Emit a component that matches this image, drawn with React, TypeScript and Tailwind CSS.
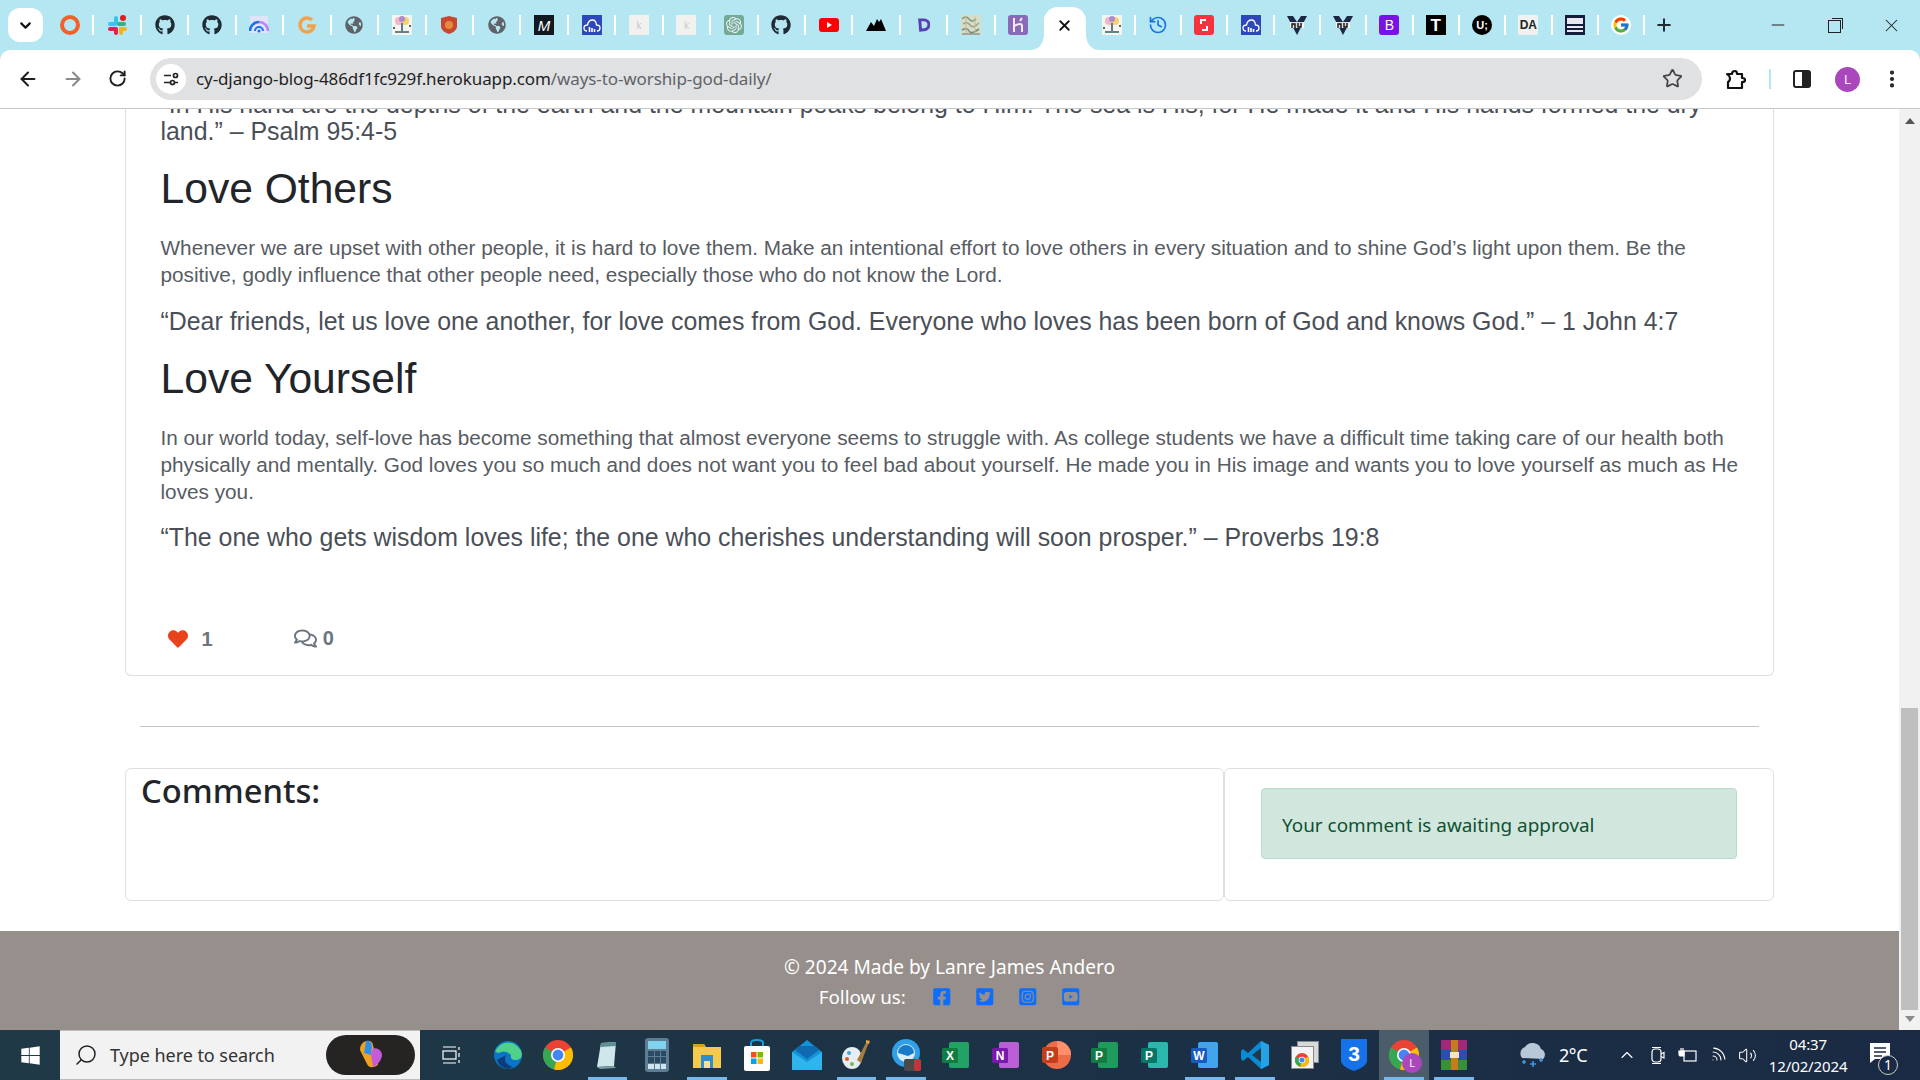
import React from 'react';
import {
  FaGithub,
  FaGlobeAmericas,
  FaHeart,
  FaRegComments,
  FaFacebookSquare,
  FaTwitterSquare,
  FaInstagramSquare,
  FaYoutubeSquare,
  FaWindows,
} from 'react-icons/fa';
import { FcGoogle } from 'react-icons/fc';
import { SiOpenai } from 'react-icons/si';
import {
  ArrowLeft,
  ArrowRight,
  ChevronDown,
  ChevronUp,
  Star,
  RotateCw,
  X,
  Plus,
  Minus,
  MoreVertical,
  History,
  Search,
  Wifi,
  Volume2,
} from 'lucide-react';

const Sq = ({ className, children }: { className: string; children?: React.ReactNode }) => (
  <div className={`w-5 h-5 flex items-center justify-center ${className}`}>{children}</div>
);

const Globe = () => <FaGlobeAmericas className="text-[#5f6368] text-[18px]" />;

const Speedo = () => (
  <svg width="20" height="20" viewBox="0 0 20 20">
    <rect x="1" y="1" width="18" height="17" fill="#dfe4fb" />
    <path d="M1 16 A9 9 0 0 1 10 7" stroke="#1a73e8" strokeWidth="2.6" fill="none" />
    <path d="M10 7 A9 9 0 0 1 19 16" stroke="#b784f0" strokeWidth="2.6" fill="none" />
    <path d="M6 16 A4 4 0 0 1 14 16" stroke="#1a73e8" strokeWidth="2" fill="none" />
    <circle cx="10" cy="16" r="1.6" fill="#1a73e8" />
  </svg>
);

const Slack = () => (
  <svg width="20" height="20" viewBox="0 0 20 20">
    <rect x="7" y="1" width="4" height="9" rx="2" fill="#36c5f0" />
    <rect x="1" y="7" width="9" height="4" rx="2" fill="#36c5f0" />
    <circle cx="16" cy="3" r="3" fill="#e01e1e" />
    <rect x="10" y="7" width="9" height="4" rx="2" fill="#2eb67d" />
    <rect x="1" y="12" width="9" height="4" rx="2" fill="#e01e5a" />
    <rect x="7" y="12" width="4" height="8" rx="2" fill="#e01e5a" />
    <rect x="12" y="12" width="8" height="4" rx="2" fill="#ecb22e" />
    <rect x="12" y="12" width="4" height="8" rx="2" fill="#ecb22e" />
  </svg>
);

const Cloud = () => (
  <Sq className="bg-[#2f47bd]">
    <svg width="18" height="14" viewBox="0 0 18 14" fill="none" stroke="#fff" strokeWidth="1.3">
      <path d="M4 13 Q1 13 1 10 Q1 7 4.5 7 Q5.5 2 9.5 2 Q13 2 13.5 7 Q17 7 17 10 Q17 13 14 13" />
      <path d="M6.5 14 V9 M9 14 V10 M11.5 14 V11" strokeWidth="1.6" />
    </svg>
  </Sq>
);

const Tree = () => (
  <svg width="20" height="20" viewBox="0 0 20 20">
    <rect width="20" height="20" fill="#f4f5ef" />
    <circle cx="7" cy="6" r="4" fill="#f0b7c8" />
    <circle cx="13" cy="6" r="4" fill="#f3d36a" />
    <circle cx="10" cy="4" r="3" fill="#b08ad0" />
    <rect x="9" y="8" width="2" height="8" fill="#5d7b8a" />
    <rect x="3" y="16" width="14" height="2" fill="#66808a" />
    <circle cx="18" cy="11" r="1" fill="#333" />
    <circle cx="2" cy="13" r="1" fill="#333" />
  </svg>
);

const Pale = () => (
  <Sq className="bg-[#f1f2f0]">
    <span className="text-[#c9c9c9] text-[10px] font-['Liberation_Sans',sans-serif]">k</span>
  </Sq>
);

const Mosaic = () => (
  <svg width="20" height="20" viewBox="0 0 20 20" fill="none" strokeWidth="1.6">
    <rect width="20" height="20" fill="#d8ddc8" />
    <path d="M1 4 Q5 0 8 4 T15 4" stroke="#7f9c86" />
    <path d="M2 9 Q6 6 9 10 T18 8" stroke="#9aa88e" />
    <path d="M1 15 Q6 12 8 16 T18 14" stroke="#6f8f7c" />
    <path d="M5 1 V18 M14 2 V17" stroke="#c8b8a0" strokeWidth="1.1" />
    <path d="M1 19 H19" stroke="#555" strokeWidth="0.8" />
  </svg>
);

const TabIcons: React.ReactNode[] = [
  <div className="w-5 h-5 rounded-full border-[4px] border-[#f0622a]" />,
  <Slack />,
  <FaGithub className="text-[#1f2a33] text-[20px]" />,
  <FaGithub className="text-[#1f2a33] text-[20px]" />,
  <Speedo />,
  <svg width="20" height="20" viewBox="0 0 20 20" fill="none" stroke="#f2a24b" strokeWidth="3.4">
    <path d="M15 5 A7 7 0 1 0 17 11 H10" />
  </svg>,
  <Globe />,
  <Tree />,
  <svg width="20" height="20" viewBox="0 0 20 20">
    <path d="M2 3 L10 1 L18 3 V12 Q17 17 10 19 Q3 17 2 12 Z" fill="#c8482f" />
    <circle cx="10" cy="10" r="4" fill="#e9893a" />
  </svg>,
  <Globe />,
  <Sq className="bg-[#111820]">
    <span className="text-white italic text-[15px] leading-none font-['Liberation_Sans',sans-serif]">M</span>
  </Sq>,
  <Cloud />,
  <Pale />,
  <Pale />,
  <Sq className="bg-[#74a898] rounded-[3px]">
    <SiOpenai className="text-[#e8f1ee] text-[16px]" />
  </Sq>,
  <FaGithub className="text-[#1f2a33] text-[20px]" />,
  <svg width="20" height="14" viewBox="0 0 20 14">
    <rect width="20" height="14" rx="3" fill="#f00" />
    <path d="M8 4 L13 7 L8 10 Z" fill="#fff" />
  </svg>,
  <svg width="20" height="12" viewBox="0 0 20 12">
    <path d="M0 12 L5 3 L8 7 L11 0 L15 0 L20 12 Z M11 0 L13 3 L15 0 Z" fill="#000" />
  </svg>,
  <svg width="12" height="14" viewBox="0 0 14 16" fill="none" stroke="#5a3fb0" strokeWidth="3.4">
    <path d="M2 2 H7 A5.5 5.5 0 0 1 7 13.5 L3 14 Z" />
  </svg>,
  <Mosaic />,
  <Sq className="bg-[#8a6ab8] rounded-[3px]">
    <svg width="14" height="16" viewBox="0 0 14 16" fill="none" stroke="#f1e9f7" strokeWidth="2">
      <path d="M3 1 V15 M3 9 Q11 5 11 9 V15 M11 1 L9 4" />
    </svg>
  </Sq>,
];

const VueIcon = () => (
  <svg width="20" height="20" viewBox="0 0 20 20">
    <path d="M0 1 L6 1 L10 7 L14 1 L20 1 L10 20 Z" fill="#1d2747" />
    <rect x="3" y="7" width="14" height="6" fill="#fff" opacity="0.85" />
    <path d="M5 13 V9 H8 V13 M11 8 V12 H14 V8" stroke="#111" strokeWidth="1.4" fill="none" />
  </svg>
);

const TabIconsRight: React.ReactNode[] = [
  <Tree />,
  <History size={20} className="text-[#1a73e8]" />,
  <Sq className="bg-[#f5333f] rounded-[3px]">
    <svg width="14" height="14" viewBox="0 0 14 14" fill="none" stroke="#fff" strokeWidth="2">
      <path d="M9 2 H4 V6 M5 12 H10 V8" />
    </svg>
  </Sq>,
  <Cloud />,
  <VueIcon />,
  <VueIcon />,
  <Sq className="bg-[#7a12e8] rounded-[3px]">
    <span className="text-white text-[14px] leading-none font-['Liberation_Sans',sans-serif]">B</span>
  </Sq>,
  <Sq className="bg-black">
    <span className="text-white font-bold text-[17px] leading-none font-['Liberation_Sans',sans-serif]">T</span>
  </Sq>,
  <div className="w-5 h-5 rounded-full bg-black flex items-center justify-center text-white font-bold text-[11px] font-['Liberation_Sans',sans-serif]">
    U;
  </div>,
  <Sq className="bg-[#f0f1f1] rounded-[2px]">
    <span className="text-[#222] font-bold text-[12px] leading-none font-['Liberation_Sans',sans-serif]">DA</span>
  </Sq>,
  <div className="w-5 h-5 bg-[#161c3a] flex flex-col justify-center gap-[2px] px-[2px]">
    <div className="h-[6px] bg-[#e8e8ee]" />
    <div className="h-[2px] bg-[#e8e8ee]" />
    <div className="h-[2px] bg-[#e8e8ee]" />
  </div>,
  <div className="w-5 h-5 rounded-full bg-white flex items-center justify-center">
    <FcGoogle className="text-[18px]" />
  </div>,
];

const Tab = ({ children, sep = true, narrow = false }: { children: React.ReactNode; sep?: boolean; narrow?: boolean }) => (
  <div className={`relative h-full flex items-center justify-center shrink-0 ${narrow ? 'w-[46.3px]' : 'w-[47.45px]'}`}>
    {children}
    {sep && <div className="absolute right-[-1px] top-[15px] h-[20px] w-[2px] bg-white" />}
  </div>
);

const ActiveTab = () => (
  <div className="relative w-[42px] h-[43px] mt-[7px] ml-[1.7px] mr-[2.7px] bg-white rounded-t-[14px] flex items-center justify-center shrink-0 pb-[6px]">
    <X size={17} strokeWidth={2.6} className="text-[#111]" />
    <svg className="absolute -left-[14px] bottom-0" width="14" height="14" viewBox="0 0 14 14">
      <path d="M14 0 V14 H0 Q12 14 14 0 Z" fill="#fff" />
    </svg>
    <svg className="absolute -right-[14px] bottom-0" width="14" height="14" viewBox="0 0 14 14">
      <path d="M0 0 V14 H14 Q2 14 0 0 Z" fill="#fff" />
    </svg>
  </div>
);

const TabStrip = () => (
  <div className="h-[50px] bg-[#b5e7f3] flex items-start relative shrink-0">
    <div className="w-[35px] h-[34px] ml-2 mt-2 bg-white rounded-xl flex items-center justify-center shrink-0">
      <ChevronDown size={17} strokeWidth={3} className="text-[#111]" />
    </div>
    <div className="flex h-full ml-[3px]">
      {TabIcons.map((icon, i) => (
        <Tab key={i} sep={i !== TabIcons.length - 1}>
          {icon}
        </Tab>
      ))}
      <ActiveTab />
      {TabIconsRight.map((icon, i) => (
        <Tab key={i} narrow>
          {icon}
        </Tab>
      ))}
      <div className="w-[40px] h-full flex items-center justify-center shrink-0">
        <Plus size={20} strokeWidth={2.4} className="text-[#1f2a33]" />
      </div>
    </div>
    <div className="ml-auto flex h-full items-center pr-[18px] gap-[40px] text-[#222]">
      <Minus size={20} strokeWidth={1.4} />
      <div className="relative w-[13px] h-[13px] border border-[#222] bg-[#b5e7f3] mt-[2px]">
        <div className="absolute -top-[3px] -right-[3px] w-[11px] h-[11px] border-t border-r border-[#222]" />
      </div>
      <X size={21} strokeWidth={1.2} />
    </div>
  </div>
);

const Toolbar = () => (
  <div className="h-[59px] bg-white rounded-t-[10px] border-b border-[#c8c8c8] flex items-center shrink-0 pb-[1px]">
    <div className="w-[150px] flex items-center justify-around pl-[5px] pr-[11px] shrink-0">
      <ArrowLeft size={22} strokeWidth={2.2} className="text-[#1f1f1f]" />
      <ArrowRight size={22} strokeWidth={2.2} className="text-[#8a8a8a]" />
      <RotateCw size={19} strokeWidth={2.4} className="text-[#1f1f1f]" />
    </div>
    <div className="w-[1552px] h-[42px] rounded-full bg-[#e0e1e3] flex items-center pl-[6px] pr-[19px] shrink-0">
      <div className="w-[30px] h-[30px] rounded-full bg-white flex items-center justify-center">
        <svg width="16" height="16" viewBox="0 0 16 16" fill="none" stroke="#222" strokeWidth="1.7">
          <path d="M1 4.5 H8 M11 11.5 H15 M1 11.5 H7" />
          <circle cx="12.5" cy="4.5" r="2" />
          <circle cx="9.5" cy="11.5" r="2" />
        </svg>
      </div>
      <div className="ml-[10px] pt-[1px] font-['Noto_Sans',sans-serif] text-[17px] tracking-[-0.1px] text-[#1f1f1f] whitespace-nowrap">
        cy-django-blog-486df1fc929f.herokuapp.com
        <span className="text-[#5f6368]">/ways-to-worship-god-daily/</span>
      </div>
      <Star size={21} strokeWidth={2} className="ml-auto text-[#444]" />
    </div>
    <div className="flex items-center flex-1 relative h-full">
      <svg className="absolute left-[23px] top-[19px]" width="21" height="21" viewBox="0 0 21 21" fill="none" stroke="#111" strokeWidth="2.2">
        <path d="M2 5 H7 Q7 2 10 2 Q12 2 12 5 H17 V9 Q20 9 20 11 Q20 13 17 13 V19 H3 Q3 15 3 13 Q5 12 5 9 Q5 7 2 5 Z" strokeLinejoin="round" />
      </svg>
      <div className="absolute left-[67px] top-[19px] h-[20px] w-[2px] bg-[#b5e7f3]" />
      <div className="absolute left-[91px] top-[20px] w-[18px] h-[18px] rounded-[3px] border-2 border-[#222] flex justify-end">
        <div className="w-[7px] h-full bg-[#222]" />
      </div>
      <div className="absolute left-[133px] top-[17px] w-[25px] h-[25px] rounded-full bg-[#ab47bc] text-white text-[12px] flex items-center justify-center font-['Liberation_Sans',sans-serif]">
        L
      </div>
      <MoreVertical size={22} strokeWidth={2.6} className="absolute left-[179px] top-[18px] text-[#222]" />
    </div>
  </div>
);

const Para = ({ className = '', children }: { className?: string; children: React.ReactNode }) => (
  <p className={`text-[20.76px] leading-[27px] text-[#575c63] ${className}`}>{children}</p>
);

const Quote = ({ className = '', children }: { className?: string; children: React.ReactNode }) => (
  <p className={`text-[24.9px] leading-[27px] text-[#4a4f57] ${className}`}>{children}</p>
);

const Heading = ({ className = '', children }: { className?: string; children: React.ReactNode }) => (
  <h2 className={`text-[42.6px] leading-[48px] text-[#212529] ${className}`}>{children}</h2>
);

const Article = () => (
  <div className="-mt-[18px] border-x border-b border-[#dfdfdf] rounded-b-[6px] pl-[34.5px] pr-[28px] h-[585px] font-['Liberation_Sans',sans-serif]">
    <Quote>
      “In His hand are the depths of the earth and the mountain peaks belong to Him. The sea is His, for He made it and
      His hands formed the dry land.” – Psalm 95:4-5
    </Quote>
    <Heading className="mt-[19px]">Love Others</Heading>
    <Para className="mt-[22px]">
      Whenever we are upset with other people, it is hard to love them. Make an intentional effort to love others in
      every situation and to shine God’s light upon them. Be the positive, godly influence that other people need,
      especially those who do not know the Lord.
    </Para>
    <Quote className="mt-[20px]">
      “Dear friends, let us love one another, for love comes from God. Everyone who loves has been born of God and knows
      God.” – 1 John 4:7
    </Quote>
    <Heading className="mt-[19px]">Love Yourself</Heading>
    <Para className="mt-[22px]">
      In our world today, self-love has become something that almost everyone seems to struggle with. As college students
      we have a difficult time taking care of our health both physically and mentally. God loves you so much and does not
      want you to feel bad about yourself. He made you in His image and wants you to love yourself as much as He loves
      you.
    </Para>
    <Quote className="mt-[19px]">
      “The one who gets wisdom loves life; the one who cherishes understanding will soon prosper.” – Proverbs 19:8
    </Quote>
    <div className="mt-[76px] flex items-center text-[#6c757d] font-bold text-[20px] leading-[24px]">
      <FaHeart className="text-[#e8431a] text-[20px] ml-[7px]" />
      <span className="ml-[14px]">1</span>
      <FaRegComments size={23} className="ml-[81px] -mt-[2px]" />
      <span className="ml-[6px] -mt-[2px]">0</span>
    </div>
  </div>
);

const Comments = () => (
  <div className="mt-[41px] flex h-[133px]">
    <div className="w-[1099px] border border-[#dfdfdf] rounded-[6px] px-[15px]">
      <h3 className="font-['Noto_Sans',sans-serif] font-medium text-[32.7px] leading-[44px] text-[#212529]">Comments:</h3>
    </div>
    <div className="flex-1 border border-[#dfdfdf] rounded-[6px] pt-[19px] px-[36px]">
      <div className="h-[71px] bg-[#d1e7dd] border border-[#badbcc] rounded-[4px] flex items-center pl-[20px] pt-[3px] font-['Noto_Sans',sans-serif] text-[18.9px] text-[#0f5132]">
        Your comment is awaiting approval
      </div>
    </div>
  </div>
);

const Footer = () => (
  <div className="mt-[30px] h-[100px] bg-[#968f8b] flex flex-col items-center pt-[21px] font-['Noto_Sans',sans-serif] text-white text-[19.1px] leading-[30px]">
    <div>© 2024 Made by Lanre James Andero</div>
    <div className="flex items-center">
      <span className="text-[18.8px]">Follow us:</span>
      <div className="flex items-center gap-[23.5px] ml-[26px] text-[#0d6efd]">
        <FaFacebookSquare size={19.5} />
        <FaTwitterSquare size={19.5} />
        <FaInstagramSquare size={19.5} />
        <FaYoutubeSquare size={19.5} />
      </div>
    </div>
  </div>
);

const Scrollbar = () => (
  <div className="w-[21px] bg-[#f1f1f1] flex flex-col items-center shrink-0">
    <svg className="mt-[9px]" width="10" height="6" viewBox="0 0 10 6">
      <path d="M0 6 L5 0 L10 6 Z" fill="#555" />
    </svg>
    <div className="w-[17px] h-[302px] bg-[#bfbfbf] mt-[584px]" />
    <svg className="mt-[6px]" width="10" height="6" viewBox="0 0 10 6">
      <path d="M0 0 L5 6 L10 0 Z" fill="#8a8a8a" />
    </svg>
  </div>
);

const Chrome = ({ size = 30 }: { size?: number }) => (
  <svg width={size} height={size} viewBox="0 0 30 30">
    <circle cx="15" cy="15" r="15" fill="#ea4335" />
    <path d="M15 15 L2 7.5 A15 15 0 0 0 11 29.5 Z" fill="#34a853" />
    <path d="M15 15 L28 7.5 A15 15 0 0 1 11 29.5 Z" fill="#fbbc05" />
    <circle cx="15" cy="15" r="7" fill="#fff" />
    <circle cx="15" cy="15" r="5.4" fill="#4285f4" />
  </svg>
);

const Office = ({ dark, light, letter }: { dark: string; light: string; letter: string }) => (
  <svg width="30" height="30" viewBox="0 0 30 30">
    <rect x="8" y="2" width="20" height="26" rx="2" fill={light} />
    <rect x="1" y="8" width="16" height="15" rx="1.5" fill={dark} />
    <text x="9" y="20" textAnchor="middle" fontSize="12" fontWeight="bold" fill="#fff" fontFamily="Liberation Sans">
      {letter}
    </text>
  </svg>
);

const AppIcons: { icon: React.ReactNode; line?: boolean; active?: boolean }[] = [
  {
    icon: (
      <svg width="30" height="30" viewBox="0 0 30 30">
        <circle cx="15" cy="15" r="14" fill="#0c73c8" />
        <path d="M2 12 A14 14 0 0 1 29 14 Q29 20 22 20 Q17 20 18 15 Q12 9 6 13 Z" fill="#4fd18a" />
        <path d="M13 15 Q9 24 20 27 L15 29 Q7 28 4 20 Z" fill="#0d3d77" />
      </svg>
    ),
  },
  { icon: <Chrome /> },
  {
    icon: (
      <svg width="30" height="30" viewBox="0 0 30 30">
        <path d="M9 3 L24 2 L22 26 L5 27 Z" fill="#cfe7ea" />
        <path d="M9 3 L24 2 L24 6 L9 7 Z" fill="#5f8f96" />
        <path d="M5 27 L22 26 L24 28 L8 29 Z" fill="#7f9da3" />
      </svg>
    ),
    line: true,
  },
  {
    icon: (
      <div className="w-[24px] h-[34px] rounded-[3px] bg-[#5e7d92] flex flex-col p-[3px] gap-[2px]">
        <div className="h-[8px] bg-[#7fd3ef]" />
        <div className="grid grid-cols-3 gap-[1px] flex-1">
          {[0, 1, 2, 3, 4, 5, 6, 7, 8].map((n) => (
            <div key={n} className={n > 5 ? 'bg-[#cfe5f2]' : 'bg-[#2a4a63]'} />
          ))}
        </div>
      </div>
    ),
  },
  {
    icon: (
      <svg width="30" height="28" viewBox="0 0 30 28">
        <path d="M1 3 H12 L14 6 H29 V27 H1 Z" fill="#f7c94c" />
        <path d="M1 3 H12 L14 6 H1 Z" fill="#d9a21e" />
        <rect x="9" y="14" width="12" height="13" fill="#2e8fd0" />
        <rect x="12" y="20" width="6" height="7" fill="#f7e19a" />
      </svg>
    ),
    line: true,
  },
  {
    icon: (
      <svg width="28" height="32" viewBox="0 0 28 32">
        <path d="M8 8 V4 Q8 1 14 1 Q20 1 20 4 V8" stroke="#1a9ce0" strokeWidth="2" fill="none" />
        <rect x="1" y="7" width="26" height="25" rx="2" fill="#fff" />
        <rect x="8" y="13" width="5.5" height="5.5" fill="#f25022" />
        <rect x="14.5" y="13" width="5.5" height="5.5" fill="#7fba00" />
        <rect x="8" y="19.5" width="5.5" height="5.5" fill="#00a4ef" />
        <rect x="14.5" y="19.5" width="5.5" height="5.5" fill="#ffb900" />
      </svg>
    ),
  },
  {
    icon: (
      <svg width="32" height="32" viewBox="0 0 32 32">
        <path d="M16 1 L31 13 V31 H1 V13 Z" fill="#1294d8" />
        <path d="M1 13 L16 23 L31 13 V31 H1 Z" fill="#30b4ee" />
        <path d="M8 7 H24 L28 11 L16 20 L4 11 Z" fill="#0f6ab0" />
      </svg>
    ),
  },
  {
    icon: (
      <svg width="32" height="32" viewBox="0 0 32 32">
        <ellipse cx="12" cy="19" rx="10" ry="11" fill="#e6eef1" />
        <circle cx="9" cy="14" r="2" fill="#3fa7e0" />
        <circle cx="7" cy="20" r="2" fill="#e8552b" />
        <circle cx="12" cy="25" r="2" fill="#76b947" />
        <path d="M17 21 L27 2 L29 3 L21 24 Z" fill="#a87a3f" />
        <path d="M26 1 L30 2 L29 5 L26 4 Z" fill="#e6a43a" />
      </svg>
    ),
    line: true,
  },
  {
    icon: (
      <svg width="32" height="34" viewBox="0 0 32 34">
        <circle cx="16" cy="15" r="14" fill="#2f9fe8" />
        <circle cx="16" cy="15" r="9" fill="#d8eefb" />
        <path d="M8 15 A8 8 0 0 1 24 15 L18 18 Z" fill="#1b79c9" />
        <rect x="14" y="21" width="17" height="12" rx="2" fill="#4a4a4a" />
        <rect x="24" y="21" width="7" height="12" rx="2" fill="#c4353a" />
      </svg>
    ),
    line: true,
  },
  { icon: <Office dark="#107c41" light="#21a366" letter="X" /> },
  { icon: <Office dark="#7719aa" light="#ba5fd6" letter="N" /> },
  {
    icon: (
      <svg width="30" height="30" viewBox="0 0 30 30">
        <circle cx="16" cy="15" r="14" fill="#ed6c47" />
        <path d="M16 1 A14 14 0 0 1 30 15 H16 Z" fill="#ff8f6b" />
        <rect x="1" y="7" width="16" height="16" rx="2" fill="#c43e1c" />
        <text x="9" y="20" textAnchor="middle" fontSize="12" fontWeight="bold" fill="#fff" fontFamily="Liberation Sans">
          P
        </text>
      </svg>
    ),
  },
  {
    icon: <Office dark="#107c41" light="#1f9c5b" letter="P" />,
  },
  { icon: <Office dark="#077568" light="#2ab8ad" letter="P" /> },
  { icon: <Office dark="#185abd" light="#41a5ee" letter="W" />, line: true },
  {
    icon: (
      <svg width="30" height="30" viewBox="0 0 30 30">
        <path d="M21 1 L29 5 V25 L21 29 L8 17 L3 21 L1 19 V11 L3 9 L8 13 Z" fill="#0a8ad2" />
        <path d="M21 8 V22 L12 15 Z" fill="#1f3a4a" />
        <path d="M21 1 L29 5 V25 L21 29 Z" fill="#24a2e8" />
      </svg>
    ),
    line: true,
  },
  {
    icon: (
      <div className="relative w-[28px] h-[28px]">
        <div className="absolute right-0 top-0 w-[22px] h-[22px] bg-[#d9d9d9] border border-[#888]" />
        <div className="absolute left-0 bottom-0 w-[23px] h-[23px] bg-[#f4f4f4] border border-[#888] flex items-end justify-center pb-[1px]">
          <Chrome size={14} />
        </div>
      </div>
    ),
  },
  {
    icon: (
      <svg width="28" height="34" viewBox="0 0 28 34">
        <path d="M1 1 H27 V24 Q24 30 14 33 Q4 30 1 24 Z" fill="#1572e8" />
        <text x="14" y="23" textAnchor="middle" fontSize="21" fontWeight="bold" fill="#fff" fontFamily="Liberation Sans">
          3
        </text>
      </svg>
    ),
  },
  {
    icon: (
      <div className="relative">
        <Chrome size={30} />
        <div className="absolute -right-[3px] -bottom-[3px] w-[20px] h-[20px] rounded-full bg-[#ab47bc] text-white text-[10px] flex items-center justify-center font-['Liberation_Sans',sans-serif]">
          L
        </div>
      </div>
    ),
    line: true,
    active: true,
  },
  {
    icon: (
      <svg width="28" height="32" viewBox="0 0 28 32">
        <rect x="1" y="1" width="26" height="10" fill="#a0297a" />
        <rect x="1" y="11" width="26" height="10" fill="#2b4fb0" />
        <rect x="1" y="21" width="26" height="10" fill="#3a8f3a" />
        <rect x="11" y="1" width="7" height="30" fill="#c77a1e" />
        <rect x="10" y="13" width="9" height="6" fill="#f3e5c0" />
      </svg>
    ),
    line: true,
  },
];

const Taskbar = () => (
  <div className="h-[50px] bg-gradient-to-r from-[#1f3a46] to-[#1a2a44] flex items-stretch shrink-0 font-['Noto_Sans',sans-serif]">
    <div className="w-[60px] flex items-center justify-center shrink-0">
      <FaWindows size={21} className="text-white" />
    </div>
    <div className="w-[360px] bg-[#f2f2f2] border-y border-[#bdbdbd] flex items-center pl-[14px] pr-[5px] shrink-0">
      <Search size={24} strokeWidth={1.5} className="text-[#222] -scale-x-100" />
      <span className="ml-[12px] text-[18px] text-[#333] tracking-[-0.05px]">Type here to search</span>
      <div className="ml-auto w-[89px] h-[40px] rounded-full bg-[#252423] flex items-center justify-center">
        <svg width="26" height="30" viewBox="0 0 26 30">
          <path d="M8 1 Q14 0 15 5 L20 25 Q12 30 9 24 L2 10 Q2 3 8 1 Z" fill="#f0a21f" />
          <path d="M8 1 Q13 0 14 6 L13 15 L6 13 Z" fill="#2f8fe8" />
          <path d="M15 8 Q24 8 24 16 Q22 24 15 27 L13 15 Z" fill="#c65bd8" />
        </svg>
      </div>
    </div>
    <div className="w-[63px] flex items-center justify-center shrink-0">
      <svg width="20" height="20" viewBox="0 0 20 20" fill="none" stroke="#fff" strokeWidth="1.2">
        <rect x="1" y="6" width="13" height="8" />
        <path d="M1 2 H14 M1 18 H14 M17 2 V5 M17 8 V12 M17 15 V18" />
      </svg>
    </div>
    {AppIcons.map((app, i) => (
      <div
        key={i}
        className={`relative w-[49.8px] flex items-center justify-center shrink-0 ${app.active ? 'bg-[#4b5d6b]' : ''}`}
      >
        {app.icon}
        {app.line && <div className="absolute bottom-0 left-[5px] right-[5px] h-[3px] bg-[#76b9ed]" />}
      </div>
    ))}
    <div className="ml-[37px] flex items-center text-white shrink-0">
      <svg width="32" height="30" viewBox="0 0 32 30">
        <path d="M6 18 A7 7 0 0 1 9 7 A9 9 0 0 1 25 9 A6 6 0 0 1 27 19 Z" fill="#b9c8d8" />
        <path d="M6 22 H10 M8 20 V24 M14 24 H20 M17 21 V27 M23 20 H27 M25 18 V22" stroke="#3f95e0" strokeWidth="1.6" />
      </svg>
      <span className="ml-[11px] text-[18px] tracking-[-0.4px]">2°C</span>
    </div>
    <div className="flex items-center ml-[30px] gap-[11px] text-white shrink-0">
      <ChevronUp size={20} strokeWidth={1.4} />
      <svg width="19" height="19" viewBox="0 0 19 19" fill="none" stroke="#fff" strokeWidth="1.2">
        <rect x="4" y="3" width="9" height="13" rx="3" />
        <path d="M4 1.5 H13 M4 17.5 H13 M13 8 L16 6.5 V12 L13 10.5" />
      </svg>
      <svg width="19" height="19" viewBox="0 0 19 19" fill="none" stroke="#fff" strokeWidth="1.2">
        <rect x="6" y="5" width="12" height="10" />
        <path d="M1 5 H6 V10 H3 Q1 10 1 8 Z" fill="#fff" />
        <path d="M3 2 V5 M5 2 V5" />
      </svg>
      <Wifi size={19} strokeWidth={1.3} className="rotate-45" />
      <Volume2 size={19} strokeWidth={1.3} />
    </div>
    <div className="w-[84px] ml-[9px] flex flex-col items-center justify-center text-white text-[15px] leading-[22px] tracking-[-0.1px] shrink-0">
      <div>04:37</div>
      <div>12/02/2024</div>
    </div>
    <div className="relative ml-[19px] w-[30px] flex items-center shrink-0">
      <svg width="22" height="22" viewBox="0 0 22 22" className="mb-[5px]">
        <path d="M1 1 H21 V17 H6 L1 21 Z" fill="#fff" />
        <path d="M5 6 H17 M5 10 H17 M5 14 H13" stroke="#1a2a44" strokeWidth="1.3" />
      </svg>
      <div className="absolute left-[9px] bottom-[5px] w-[20px] h-[20px] rounded-full bg-[#1a2a44] border border-[#ccc] text-white text-[14px] leading-none flex items-center justify-center">
        1
      </div>
    </div>
  </div>
);

export default function App() {
  return (
    <div className="h-screen w-full overflow-hidden flex flex-col bg-[#b5e7f3]">
      <TabStrip />
      <Toolbar />
      <div className="flex flex-1 min-h-0 bg-white">
        <div className="flex-1 min-w-0 overflow-hidden relative">
          <div className="px-[125px]">
            <Article />
            <div className="mt-[50px] mx-[15px] border-t border-[#c4c4c4]" />
            <Comments />
          </div>
          <Footer />
        </div>
        <Scrollbar />
      </div>
      <Taskbar />
    </div>
  );
}
